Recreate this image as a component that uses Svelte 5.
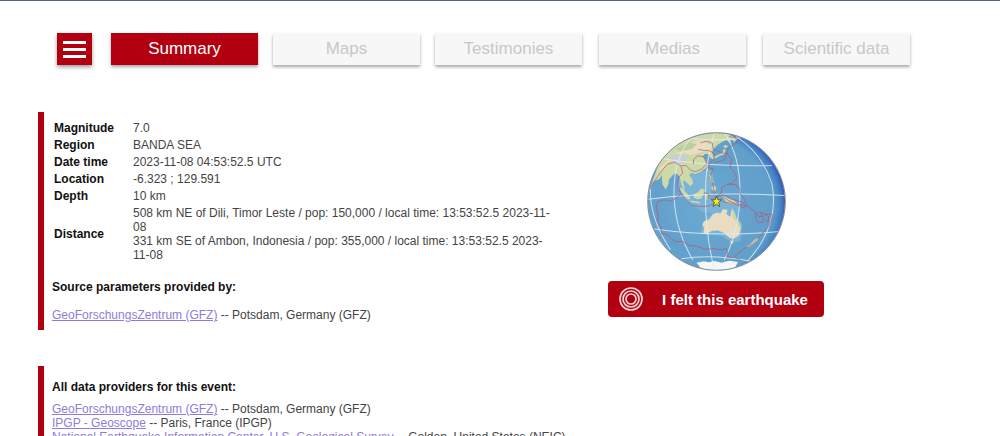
<script lang="ts">
  let active = $state('Summary');

  const tabs = ['Summary', 'Maps', 'Testimonies', 'Medias', 'Scientific data'];

  // zero-width spaces let the dates break after a hyphen
  const params = [
    { label: 'Magnitude', lines: ['7.0'] },
    { label: 'Region', lines: ['BANDA SEA'] },
    { label: 'Date time', lines: ['2023-11-08 04:53:52.5 UTC'] },
    { label: 'Location', lines: ['-6.323 ; 129.591'] },
    { label: 'Depth', lines: ['10 km'] },
    {
      label: 'Distance',
      lines: [
        '508 km NE of Dili, Timor Leste / pop: 150,000 / local time: 13:53:52.5 2023-\u200b11-\u200b08',
        '331 km SE of Ambon, Indonesia / pop: 355,000 / local time: 13:53:52.5 2023-\u200b11-\u200b08'
      ]
    }
  ];

  const providers = [
    { name: 'GeoForschungsZentrum (GFZ)', place: 'Potsdam, Germany (GFZ)' },
    { name: 'IPGP - Geoscope', place: 'Paris, France (IPGP)' },
    { name: 'National Earthquake Information Center, U.S. Geological Survey', place: 'Golden, United States (NEIC)' }
  ];
</script>

<div class="page">
  <nav>
    <button class="menu" aria-label="Menu">
      <span></span>
      <span></span>
      <span></span>
    </button>
    <div class="tabs">
      {#each tabs as tab}
        <button class="tab" class:active={active === tab} onclick={() => (active = tab)}>{tab}</button>
      {/each}
    </div>
  </nav>

  <main>
    <div class="top">
      <section class="box summary">
        <table>
          <tbody>
            {#each params as p}
              <tr>
                <th scope="row">{p.label}</th>
                <td>
                  {#each p.lines as line}
                    <div>{line}</div>
                  {/each}
                </td>
              </tr>
            {/each}
          </tbody>
        </table>
        <h2>Source parameters provided by:</h2>
        <p><a href="#gfz">{providers[0].name}</a> -- {providers[0].place}</p>
      </section>

      <aside>
        <svg class="globe" viewBox="20 22 416 416" role="img" aria-label="Epicenter location">
          <defs>
            <radialGradient id="sea" gradientUnits="userSpaceOnUse" cx="196" cy="242" r="246">
              <stop offset="0" stop-color="#6cabd3" />
              <stop offset="0.82" stop-color="#609fca" />
              <stop offset="0.92" stop-color="#427fc3" />
              <stop offset="1" stop-color="#2f3fae" />
            </radialGradient>
            <clipPath id="disc"><circle cx="228" cy="230" r="205" /></clipPath>
          </defs>
          <g clip-path="url(#disc)">
            <rect x="20" y="20" width="420" height="420" fill="url(#sea)" />
            <g class="shelf">
              <path d="M118 150 L215 135 L222 175 L205 215 L240 225 L290 235 L300 260 L270 270 L190 262 L130 225 L112 185Z" />
              <path d="M186 292 L230 250 L280 244 L306 300 L300 350 L270 350 L240 332 L180 326Z" />
            </g>
            <g class="green">
              <path d="M20 215 L40 170 L58 162 L64 150 L66 178 L76 194 L84 178 L86 164 L98 150 L108 146 L117 154 L122 176 L128 192 L133 199 L131 182 L127 172 L132 167 L142 177 L150 184 L158 176 L155 163 L146 151 L153 144 L164 148 L180 142 L194 132 L201 119 L195 105 L187 96 L192 88 L203 88 L209 98 L218 104 L222 96 L214 83 L218 74 L230 62 L246 51 L258 46 L270 57 L270 44 L282 52 L291 42 L255 24 L190 20 L115 50 L60 105Z" />
              <path d="M117 187 L126 191 L139 205 L149 218 L148 225 L138 220 L125 204Z" />
              <path d="M150 227 L166 229 L180 232 L178 236 L162 234 L150 231Z" />
              <path d="M158 209 L171 203 L184 190 L193 196 L188 209 L183 221 L171 223 L160 218Z" />
              <path d="M194 207 L211 204 L208 209 L199 211 L207 217 L204 220 L199 216 L199 227 L193 223Z" />
              <path d="M205 150 L212 151 L211 164 L219 171 L217 175 L207 168Z" />
              <path d="M212 188 L222 181 L228 190 L224 200 L216 196Z" />
              <path d="M201 130 L205 132 L202 140 L199 137Z" />
              <path d="M244 214 L254 215 L262 220 L276 224 L287 232 L296 243 L283 240 L272 237 L258 234 L253 225Z" />
              <path d="M222 101 L229 99 L239 92 L252 89 L255 76 L249 72 L247 83 L235 89 L223 95Z" />
              <path d="M248 64 L254 61 L264 65 L254 71Z" />
              <path d="M315 367 L329 358 L342 344 L354 337 L352 345 L342 354 L326 366Z" />
              <path d="M268 349 L279 347 L278 356 L272 357Z" />
            </g>
            <g class="land">
              <path d="M48 140 L104 87 L150 62 L163 49 L190 47 L210 62 L203 77 L179 83 L151 92 L130 83 L104 95 L80 118 L62 136Z" />
              <path d="M190 290 L207 283 L217 268 L231 263 L240 266 L247 253 L261 255 L258 268 L269 276 L274 250 L281 263 L286 280 L298 294 L301 310 L295 332 L281 341 L267 339 L257 330 L250 324 L232 316 L214 318 L197 328 L189 324 L191 310 L186 299Z" />
            </g>
            <path class="plateau" d="M87 98 L106 88 L133 90 L143 100 L132 114 L104 116 L88 108Z" />
            <path class="steppe" d="M107 71 L145 54 L169 58 L154 73 L118 81Z" />
            <path class="north" d="M277 254 L284 266 L289 284 L299 297 L301 312 L295 304 L283 286 L275 274Z" />
            <path class="ice" d="M168 413 L190 409 L205 412 L222 408 L242 413 L266 407 L292 411 L277 440 L190 440Z" />
            <g class="grid">
              <path d="M147 39 Q222 52 300 40" />
              <path d="M67 102 Q220 128 394 122" />
              <path d="M24 223 Q220 200 433 212" />
              <path d="M42 312 Q220 338 418 320" />
              <path d="M123 401 Q220 386 330 409" />
              <path d="M30 193 Q28 280 90 374" />
              <path d="M151 40 C83 122 83 278 157 405" />
              <path d="M222 24 C182 142 190 310 222 435" />
              <path d="M251 25 C314 112 314 280 251 405" />
              <path d="M286 35 Q363 83 394 177 Q418 302 321 408" />
            </g>
            <g class="plates">
              <path d="M27 192 L59 145 L80 119 L102 112 L122 124 L127 145 L113 160 L111 180 L119 201 L134 224 L151 240 L176 245 L202 244 L218 237 L229 231" />
              <path d="M123 123 L137 122 L150 136 L164 141 L184 133 L199 117 L190 96 L172 93 L159 105 L159 118" />
              <path d="M173 74 L190 77 L203 77 L218 84 L221 104 L205 118 L205 134 L218 130 L211 151 L205 159 L216 173 L220 193 L222 207" />
              <path d="M180 54 L199 50 L215 55 L219 74 L234 80 L249 86 L259 86 L264 68 L287 56 L292 43 L265 35" />
              <path d="M257 86 L254 104 L221 115" />
              <path d="M259 86 L274 105 L268 127 L282 143 L289 159 L277 175 L263 178 L244 187 L242 205 L232 212" />
              <path d="M263 178 L284 180 L298 190 L298 207 L310 220 L316 235" />
              <path d="M191 204 L206 207 L202 216 L215 224 L227 216 L245 210 L259 213 L270 222 L288 227 L305 232 L319 244 L309 248 L294 242 L273 235 L250 232 L240 227 L230 231" />
              <path d="M247 215 L265 228 L287 237 L303 240 L319 242 L334 253 L346 263 L345 283 L355 294 L366 291 L369 279 L357 261 L374 268 L394 268 L394 282 L383 306 L362 330 L350 342 L335 358 L312 370 L292 385 L282 397 L302 407" />
              <path d="M371 268 L384 275 L382 292 L373 284 M348 264 L355 276 L368 273" />
              <path d="M47 248 L52 230 L71 225 L91 229 L110 219 L123 207" />
              <path d="M47 246 L54 272 L51 291 L62 309 L63 327 L80 329 L94 343 L109 351 L126 349 L144 361 L168 364 L195 373 L218 371 L245 375 L256 369 L261 382 L259 395 L279 399" />
            </g>
          </g>
          <circle class="rim" cx="228" cy="230" r="206" />
          <path class="star" d="M228 214 L232 225 L243 225 L234 233 L238 245 L228 238 L218 245 L222 233 L213 225 L224 225Z" />
        </svg>
        <button class="felt">
          <svg viewBox="0 0 24 24" aria-hidden="true">
            <circle cx="12" cy="12" r="5" />
            <circle cx="12" cy="12" r="8" />
            <circle cx="12" cy="12" r="11" />
          </svg>
          <span>I felt this earthquake</span>
        </button>
      </aside>
    </div>

    <section class="box providers">
      <h2>All data providers for this event:</h2>
      <ul>
        {#each providers as p}
          <li><a href="#provider">{p.name}</a> -- {p.place}</li>
        {/each}
      </ul>
    </section>
  </main>
</div>

<style>
  :global(body) {
    background: #fff;
  }
  .page {
    border-top: 1px solid #52677c;
    font-family: "Liberation Sans", Arial, sans-serif;
    font-size: 12px;
    line-height: 14px;
    color: #444;
  }
  nav {
    display: flex;
    padding: 32px 90px 0 57px;
  }
  button {
    font-family: inherit;
    border: none;
    cursor: pointer;
  }
  .menu {
    display: flex;
    flex-direction: column;
    justify-content: center;
    gap: 4px;
    width: 35px;
    height: 32px;
    padding: 0 6px;
    background: #b20011;
    box-shadow: 0 2px 4px rgba(0, 0, 0, 0.4);
  }
  .menu span {
    height: 3px;
    background: #fff;
  }
  .tabs {
    display: flex;
    flex: 1;
    margin-left: 19px;
  }
  .tab {
    flex: 1;
    height: 32px;
    margin-right: 15px;
    padding: 0;
    font-size: 17px;
    color: #c8c8c8;
    background: #f7f7f7;
    box-shadow: 0 2px 3px rgba(0, 0, 0, 0.35);
  }
  .tab:nth-child(n + 3) {
    margin-right: 17px;
  }
  .tab:last-child {
    margin-right: 0;
  }
  .tab.active {
    color: #fff;
    background: #b20011;
  }
  main {
    padding: 47px 38px 20px;
  }
  .top {
    display: flex;
    align-items: flex-start;
  }
  .box {
    border-left: 6px solid #b20011;
    padding-left: 8px;
  }
  .summary {
    flex: 0 1 504px;
    padding-top: 7px;
    padding-bottom: 8px;
  }
  table {
    border-spacing: 1px;
  }
  th, td {
    padding: 1px;
    text-align: left;
  }
  th {
    width: 76px;
    color: #111;
  }
  h2 {
    margin: 0;
    font-size: 12px;
    line-height: 14px;
    color: #111;
  }
  .summary h2 {
    margin-top: 16px;
  }
  p {
    margin: 14px 0 0;
  }
  a {
    color: #8f7bdc;
  }
  aside {
    display: flex;
    flex-direction: column;
    align-items: center;
    width: 320px;
    padding-top: 20px;
  }
  .globe {
    width: 139px;
    height: 139px;
  }
  .shelf {
    fill: #86bcdc;
    opacity: 0.6;
  }
  .green {
    fill: #ced9a9;
  }
  .land {
    fill: #e9dcc0;
  }
  .plateau {
    fill: #c8cfd2;
  }
  .steppe {
    fill: #b9cf9e;
  }
  .north {
    fill: #cbd5ac;
  }
  .ice {
    fill: #f4f7fa;
  }
  .grid {
    fill: none;
    stroke: #e3edf5;
    stroke-width: 3;
    opacity: 0.85;
  }
  .plates {
    fill: none;
    stroke: #b9536d;
    stroke-width: 2;
    stroke-linejoin: round;
  }
  .rim {
    fill: none;
    stroke: #4c5565;
    stroke-width: 2;
  }
  .star {
    fill: #f7ee1c;
    stroke: #333;
    stroke-width: 2;
  }
  .felt {
    display: flex;
    align-items: center;
    gap: 19px;
    height: 36px;
    margin-top: 10px;
    padding: 0 16px 0 11px;
    border-radius: 4px;
    background: #b20011;
    color: #fff;
    font-size: 15px;
    font-weight: bold;
    white-space: nowrap;
  }
  .felt svg {
    width: 24px;
    height: 24px;
    fill: none;
    stroke: #f3d5d8;
    stroke-width: 1.7;
  }
  .providers {
    margin-top: 36px;
    padding-top: 14px;
    padding-bottom: 8px;
  }
  ul {
    list-style: none;
    margin: 8px 0 0;
    padding: 0;
  }
</style>
